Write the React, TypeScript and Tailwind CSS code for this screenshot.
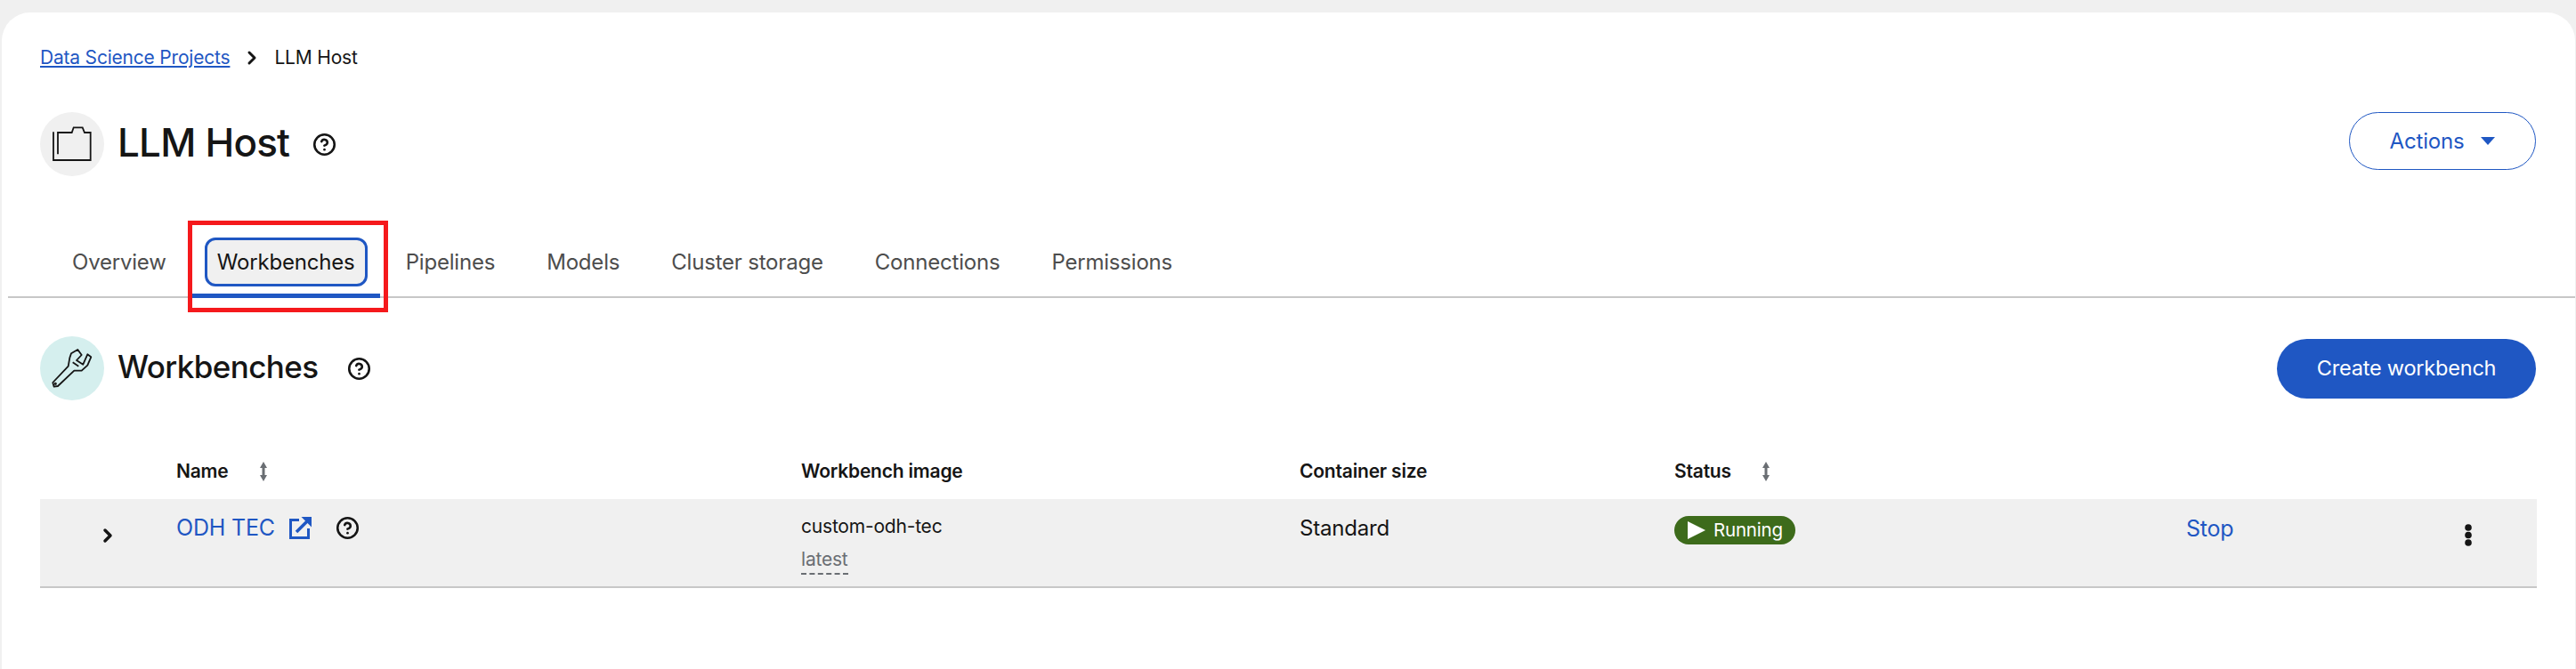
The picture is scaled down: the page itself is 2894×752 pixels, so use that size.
import { ChevronRight, CircleHelp } from 'lucide-react';

const TABS = ['Overview', 'Workbenches', 'Pipelines', 'Models', 'Cluster storage', 'Connections', 'Permissions'];

function HelpIcon({ className = '' }: { className?: string }) {
  return <CircleHelp className={`h-[27px] w-[27px] text-[#151515] ${className}`} strokeWidth={2.3} />;
}

function SortIcon() {
  return (
    <svg viewBox="0 0 12 24" className="h-6 w-3 text-[#6a6e73]" fill="currentColor">
      <path d="M6 1 10 8H7.500V16H10L6 23 2 16H4.500V8H2z" />
    </svg>
  );
}

function FolderIcon() {
  return (
    <svg viewBox="0 0 72 72" className="h-[72px] w-[72px]" fill="none" stroke="#151515" strokeWidth="1.8">
      <path d="M15 22.300V54H56.700V23H50L47.700 17.300H37.700L35.700 23H20V47.300" />
    </svg>
  );
}

function WrenchIcon() {
  return (
    <svg viewBox="0 0 72 72" className="h-[72px] w-[72px]" fill="none" stroke="#151515" strokeWidth="1.8" strokeLinejoin="round">
      <path d="M35 19.300 42.300 15 46.700 21 41 27 48.300 31.700 53.300 20.300 57.300 23.300 53.300 32.700 46.700 38.700H38.300L20 56 15.700 56.700 14.300 52 31.700 33.700 33.300 24.300Z" />
      <path d="M36.700 29.300 43.300 33.700" />
      <circle cx="17.300" cy="53.300" r="0.700" />
    </svg>
  );
}

function ExternalIcon() {
  return (
    <svg viewBox="0 0 25 25" className="h-[25px] w-[25px]" fill="none" stroke="#1f57c3">
      <path d="M11 3.500H1.500V23.500H21.500V13" strokeWidth="3" />
      <path d="M8 17 20 5" strokeWidth="3.500" />
      <path d="M13.500 0H25V11.500Z" fill="#1f57c3" stroke="none" />
    </svg>
  );
}

function Tab({ label }: { label: string }) {
  const active = label === 'Workbenches';
  return (
    <div className={`relative flex h-[73px] items-center border-b-[5px] pb-[3px] ${active ? 'border-[#1f57c3] px-[14px]' : 'border-transparent px-[29px]'}`}>
      {active ? (
        <span className="flex h-[55px] w-[183px] items-center justify-center rounded-[12px] border-[3px] border-[#1f57c3] bg-[#f0f0f0] text-[#151515]">
          {label}
        </span>
      ) : (
        <span className="text-[#4d4d4d]">{label}</span>
      )}
      {active && <div className="absolute -bottom-[21px] -left-[5px] -right-[9px] -top-[14px] border-[5px] border-[#f5191c]" />}
    </div>
  );
}

export default function App() {
  return (
    <div className="h-screen overflow-hidden bg-[#f0f0f0] pl-[2px] pr-px pt-[14px] font-['Inter',sans-serif] text-[21px] tracking-[-0.2px] text-[#151515]">
      <div className="h-full rounded-t-[32px] bg-white">
        <div className="px-[43px] pt-[36px]">
          <nav className="flex h-[30px] items-center">
            <a className="text-[#1f57c3] underline">Data Science Projects</a>
            <ChevronRight className="mx-[13px] h-6 w-6" strokeWidth={3} />
            <span>LLM Host</span>
          </nav>
          <div className="mt-[46px] flex items-start justify-between pr-[1px]">
            <div className="flex items-center">
              <div className="rounded-full bg-[#f0f0f0]"><FolderIcon /></div>
              <h1 className="-mt-1 ml-[15px] text-[44px] font-medium tracking-[-0.8px]">LLM Host</h1>
              <HelpIcon className="ml-[26px]" />
            </div>
            <button className="flex h-[65px] w-[210px] items-center justify-center gap-[19px] rounded-full border-[1.500px] border-[#1f57c3] text-[24px] text-[#1f57c3]">
              Actions
              <svg viewBox="0 0 16 9" className="h-[9px] w-4" fill="#1f57c3"><path d="M0 0H16L8 9Z" /></svg>
            </button>
          </div>
        </div>

        <div className="ml-[7px] mt-[64px] flex h-[73px] border-b-2 border-[#c7c7c7] pl-[43px] text-[24px]">
          {TABS.map((t) => <Tab key={t} label={t} />)}
        </div>

        <div className="px-[43px]">
          <div className="mt-[43px] flex items-center justify-between pr-[1px]">
            <div className="flex items-center">
              <div className="rounded-full bg-[#d5efee]"><WrenchIcon /></div>
              <h2 className="-mt-1 ml-[15px] text-[35px] font-medium tracking-[-0.6px]">Workbenches</h2>
              <HelpIcon className="ml-[33px]" />
            </div>
            <button className="h-[67px] w-[291px] rounded-full bg-[#1f57c3] text-[23.500px] text-white">Create workbench</button>
          </div>

          <div className="mt-[63px] grid h-[48px] grid-cols-[153px_702px_560px_421px_1fr] items-center pb-[14px] text-[21px] font-semibold">
            <div />
            <div className="flex items-center gap-[33px]">Name <SortIcon /></div>
            <div>Workbench image</div>
            <div>Container size</div>
            <div className="flex items-center gap-[33px]">Status <SortIcon /></div>
          </div>

          <div className="grid h-[100px] grid-cols-[153px_702px_560px_421px_1fr] border-b-2 border-[#c7c7c7] bg-[#f0f0f0]">
            <div className="flex justify-center pr-[2px] pt-[29px]">
              <ChevronRight className="h-6 w-6" strokeWidth={3.500} />
            </div>
            <div className="flex items-center self-start pt-[14px] text-[25px]">
              <a className="text-[#1f57c3]">ODH TEC</a>
              <span className="ml-4 flex"><ExternalIcon /></span>
              <HelpIcon className="ml-[27px]" />
            </div>
            <div className="pt-[15px]">
              <div>custom-odh-tec</div>
              <div className="mt-[5px] w-fit border-b-2 border-dashed border-[#6a6e73] text-[#6a6e73]">latest</div>
            </div>
            <div className="pt-[15px] text-[24px]">Standard</div>
            <div className="flex">
              <div className="w-[575px] pt-[19px]">
                <span className="inline-flex h-[32px] w-[136px] items-center gap-[9px] rounded-full bg-[#3d6b1b] pl-[15px] text-[20.500px] text-white">
                  <svg viewBox="0 0 20 22" className="h-[22px] w-5" fill="white"><path d="M0 1 20 11 0 21Z" /></svg>
                  Running
                </span>
              </div>
              <div className="flex flex-1 items-start justify-between pr-[72px] pt-[15px] text-[25px]">
                <a className="text-[#1f57c3]">Stop</a>
                <svg viewBox="0 0 10 25" className="mt-[13px] h-[25px] w-[10px]" fill="#151515">
                  <circle cx="5" cy="4" r="3.800" />
                  <circle cx="5" cy="12.500" r="3.800" />
                  <circle cx="5" cy="21" r="3.800" />
                </svg>
              </div>
            </div>
          </div>
        </div>
      </div>
    </div>
  );
}
